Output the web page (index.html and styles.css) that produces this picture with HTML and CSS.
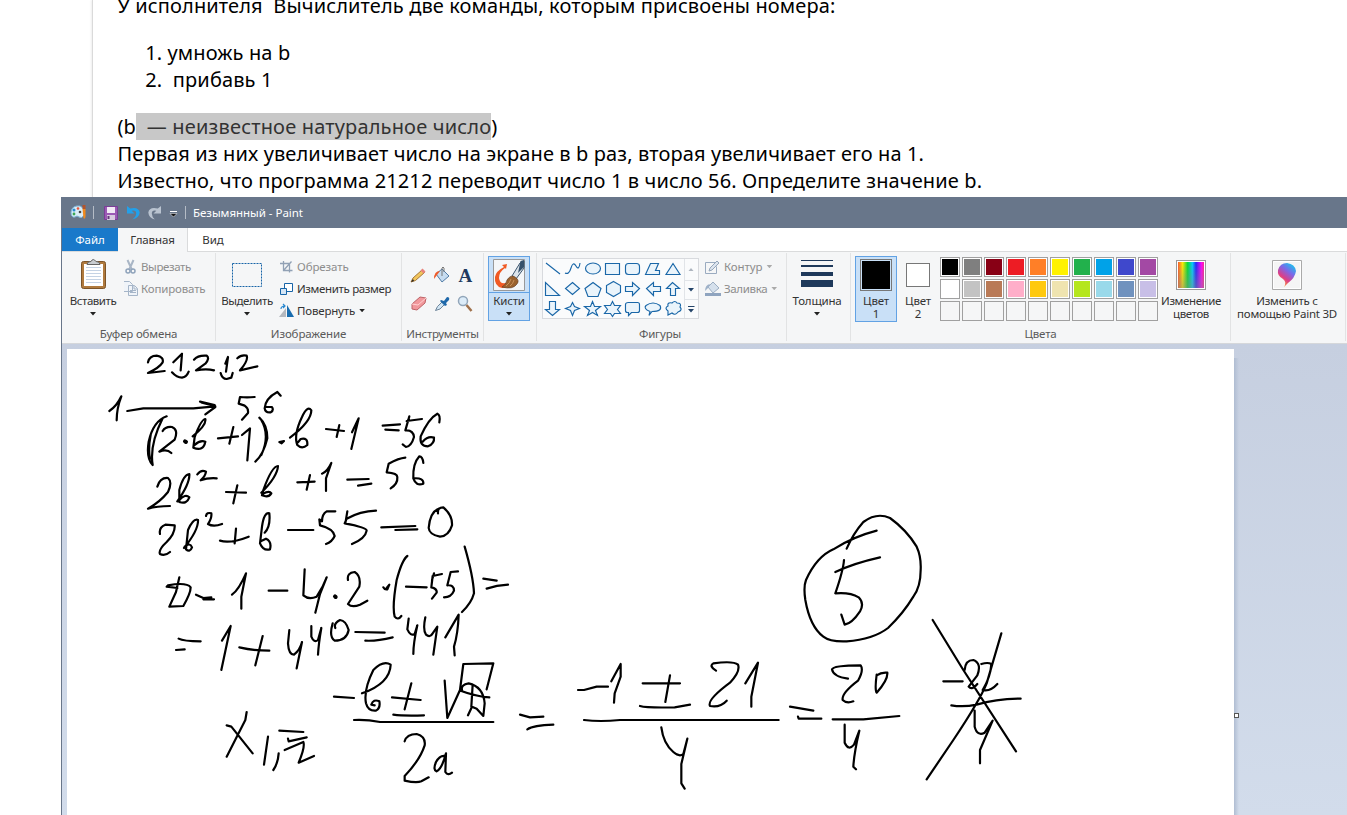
FILE: index.html
```html
<!DOCTYPE html>
<html lang="ru">
<head>
<meta charset="utf-8">
<title>Безымянный - Paint</title>
<link rel="stylesheet" href="styles.css">
</head>
<body>
<main class="screen">
<section class="problem">
<p>У исполнителя&nbsp; Вычислитель две команды, которым присвоены номера:</p>
<ol><li>умножь на b</li><li>&nbsp;прибавь 1</li></ol>
<p class="last">(b<span class="selected">&nbsp; — неизвестное натуральное число</span>)<br>Первая из них увеличивает число на экране в b раз, вторая увеличивает его на 1.<br>Известно, что программа 21212 переводит число 1 в число 56. Определите значение b.</p>
</section>
<section class="paint">
<header class="titlebar">
<svg class="quick" width="124" height="31" viewBox="62 197 124 31">
<path d="M71 212q1-7 9-6 6 3 4 9-2 4-5 2-2-2-4 0-4 1-4-5" fill="#d9edf7" stroke="#7fb5d8"/><circle cx="74" cy="210" r="1.500" fill="#2a8bd0"/><circle cx="78" cy="208.500" r="1.300" fill="#e6543a"/><circle cx="74" cy="214" r="1.400" fill="#3aa655"/><circle cx="80" cy="212" r="1.300" fill="#444"/><path d="M82.500 209h3v8q-1 3-2 1z" fill="#f28a1c"/><path d="M82.500 205h3v4h-3z" fill="#b3552c"/>
<path d="M93.500 206v13" stroke="#b5bcc6"/>
<path d="M104.500 206.500h13v13h-13z" fill="#9b5ab5" stroke="#7a3f96"/><path d="M107 207h8v6h-8z" fill="#f2eaf6"/><path d="M107 215h8v5h-8z" fill="#d8cbe0"/><path d="M108.500 216v3" stroke="#65367c" stroke-width="2"/>
<path d="M127 206v7.500h7.500l-2.800-2.800q4.500-1 4.500 2.800 0 3-4 6 7-1.500 7.500-7-1-6-9.500-4z" fill="#22a0ea"/>
<path d="M161 206v7.500h-7.500l2.800-2.800q-4.500-1-4.500 2.800 0 3 3 6-6-1.500-6.500-7 1-6 9.500-4z" fill="#b9c3d0"/>
<path d="M170 211.500h7" stroke="#fff"/><path d="M170 213.500h7l-3.500 3.500z" fill="#111" stroke="#fff" stroke-width=".5"/>
<path d="M185.500 206v13" stroke="#b5bcc6"/>
</svg>
<span class="title">Безымянный - Paint</span>
</header>
<nav class="tabs"><a class="tab file">Файл</a><a class="tab active">Главная</a><a class="tab view">Вид</a></nav>
<div class="ribbon">
<div class="group clipboard">
<div class="tools">
<div class="big"><svg width="32" height="34" viewBox="77 257 32 34"><rect x="81.500" y="261.500" width="24" height="27" rx="2" fill="#b07a3e" stroke="#7c5428"/><path d="M84 264h19v22H84z" fill="#fff"/><path d="M86 267.500h15M86 270.500h15M86 273.500h15M86 276.500h15M86 279.500h15M86 282.500h15" stroke="#c5d3e4"/><path d="M87 264.500q0-3 4-3 2-4 5 0 4 0 4 3z" fill="#c9cdd1" stroke="#666"/></svg><b>Вставить</b><i class="arrow"></i></div>
<div class="rows muted">
<div class="row"><svg width="17" height="20" viewBox="123 257 17 20"><path d="M126.500 260l4.500 10M132.500 260l-4.500 10" stroke="#a9b6c6" stroke-width="2"/><circle cx="127" cy="271" r="2" fill="none" stroke="#8fa3bb" stroke-width="1.500"/><circle cx="132" cy="271" r="2" fill="none" stroke="#8fa3bb" stroke-width="1.500"/></svg><b class="cut">Вырезать</b></div>
<div class="row"><svg width="17" height="20" viewBox="123 279 17 20"><path d="M122.500 281.500h6l3 3v7h-9zM127.500 285.500h6l3 3v7h-9z" fill="#f0f4f9" stroke="#a5b5c8"/><path d="M133 286v3h3M129 290.500h6M129 292.500h6" stroke="#a5b5c8" fill="none"/></svg><b>Копировать</b></div>
</div></div><div class="label">Буфер обмена</div></div>
<div class="group image">
<div class="tools">
<div class="big"><svg width="32" height="34" viewBox="231 257 32 34"><path d="M232.500 263.500h29v23h-29z" fill="none" stroke="#1764a7" stroke-dasharray="2 1"/></svg><b>Выделить</b><i class="arrow"></i></div>
<div class="rows">
<div class="row muted"><svg width="18" height="20" viewBox="279 257 18 20"><path d="M283.500 261v9.500h9M280 263.500h9.500v9M283.500 270.500l8-9" fill="none" stroke="#91a1b5" stroke-width="1.300"/></svg><b class="crop">Обрезать</b></div>
<div class="row"><svg width="18" height="20" viewBox="279 279 18 20"><path d="M284.500 283.500h8v8h-8z" fill="#fff" stroke="#1764a7"/><path d="M280.500 288.500h6v6h-6z" fill="#d6e6f5" stroke="#1764a7"/></svg><b class="resize">Изменить размер</b></div>
<div class="row"><svg width="18" height="20" viewBox="279 301 18 20"><path d="M279 317h7v-9z" fill="#b4b8be"/><path d="M287 317v-12l7 12z" fill="#196cae"/><path d="M281 309q0-3 4-3m-2-2l2 2-2 2" fill="none" stroke="#2888d0" stroke-width="1.200"/></svg><b>Повернуть</b><i class="arrow"></i></div>
</div></div><div class="label">Изображение</div></div>
<div class="group instruments">
<div class="tools">
<svg width="81" height="70" viewBox="402 252 81 70">
<path d="M411 282l2-4 9-8 2.500 2.500-9 8z" fill="#f2c65c" stroke="#a5773a"/><path d="M420.500 270.500l2-2 3 3-2 2z" fill="#e9837d"/><path d="M411 282l2-3 1 2z" fill="#222"/>
<path d="M436 274l6-5 7 7-7 6z" fill="#c6dcf0" stroke="#517ca6"/><path d="M442 276v-8q1-2 2 0v4" fill="none" stroke="#777"/><path d="M434 279q0-8 6-8l-3 4z" fill="#ee5b2b"/>
<text x="458.500" y="282" class="serifA">A</text>
<path d="M412 304l8-7 6 1-1 5-8 7-5-1z" fill="#f1989c" stroke="#bd6367"/><path d="M412 304l6 1 8-7" fill="none" stroke="#ffd1d1"/>
<path d="M435.500 310.500l2-4 5-5 2.500 2.500-5 5z" fill="#d1e6f5" stroke="#6d8499"/><path d="M441 300l3 1 3-4q3 0 2 3l-3 3 1 2-2 1-5-5z" fill="#1e68aa"/>
<circle cx="463" cy="301" r="4.500" fill="#dcecf9" stroke="#91a5b9" stroke-width="1.500"/><path d="M466.500 305l5 6" stroke="#a0714c" stroke-width="2.500"/>
</svg></div><div class="label">Инструменты</div></div>
<div class="group brushes"><div class="brush"><svg width="34" height="35" viewBox="492 257 34 35"><path d="M493.500 259.500h31v31h-31z" fill="#f4f6f8" stroke="#999"/><path d="M507 264l-5 1 2 2q-8 4-9 10-1 9 7 11 7 0 7-6-9 4-10-4 0-6 6-10l1 1z" fill="#f05a24"/><path d="M512 276l8-13 4-2v7l-8 11z" fill="#dce4eb" stroke="#3c566f"/><path d="M520.500 261l3.500-1v7l-6 6z" fill="#35516d"/><path d="M502 287q4-2 5-7 4-6 8-3 5 3 2 7-4 6-15 3" fill="#9a622e" stroke="#5b3820" stroke-width=".6"/><path d="M506 286q4-3 5-7M510 286q3-2 4-6" stroke="#ca925b" fill="none"/></svg><div class="split"><b>Кисти</b><i class="arrow"></i></div></div></div>
<div class="group shapes">
<div class="tools">
<div class="gallery"><svg width="156" height="59" viewBox="542 259 156 59">
<g fill="#eaf4fb" stroke="#1a67a8" stroke-width="1.150"><path d="M546 263l14 11M565 273q4 2 6-5t5-2 4-3" fill="none"/><ellipse cx="593" cy="268.500" rx="7.500" ry="5.500"/><path d="M605.500 263.500h14v11h-14z"/><rect x="625.500" y="263.500" width="14" height="11" rx="3"/><path d="M645.500 274.500l5-11h8l-3 7h4v4zM673 263.500l7 11h-14zM545.500 282.500v13h14zM572.500 282.500l7 6-7 6-7-6zM593 282.500l8 6-3 8h-10l-3-8zM613.500 281.500l7 4v7l-7 4-7-4v-7zM625.500 286.500h7v-4l7 6-7 7v-4h-7zM660.500 286.500h-7v-4l-7 6 7 7v-4h7zM670.500 295.500v-7h-4l6-6 7 6h-4v7zM549.500 301.500v8h-4l7 6 7-6h-4v-8zM572.500 302.500l2 4 5 2-5 2-2 5-2-5-5-2 5-2zM592.500 301.500l2 5h6l-5 4 2 5-5-3-5 3 2-5-5-4h6zM612.500 301.500l2 4h6l-3 4 3 4h-6l-2 3-2-3h-6l3-4-3-4h6z"/><path d="M628.500 302.500h9q2 0 2 2v6q0 2-2 2h-6l-3 3v-3h-1q-2 0-2-2v-6q0-2 3-2zM649 315.500l1-4q-7-3-4-6 7-5 14 0 3 6-8 6zM668 315v-4q-4-3 0-5-1-4 4-3 3-3 5 0 5 0 3 4 3 3-2 5-3 4-6 1z"/></g>
<path d="M684.500 259v59M685 280.500h13M685 299.500h13" stroke="#e1e4e8"/><path d="M688.500 271h5l-2.500-3z" fill="#aeb5bf"/><path d="M688 288h6l-3 3.500zM688 309h6l-3 3.500z" fill="#244469"/><path d="M688 306.500h6.500" stroke="#244469"/>
</svg></div>
<div class="rows muted">
<div class="row"><svg width="19" height="20" viewBox="705 257 19 20"><path d="M715 262.500h-9.500v11h11v-7" fill="none" stroke="#9aabc0"/><path d="M709 271l1-3 7-7 2 2-7 7z" fill="#dce4ee" stroke="#94a5ba"/></svg><b class="crop">Контур</b><i class="arrow"></i></div>
<div class="row"><svg width="19" height="20" viewBox="705 279 19 20"><path d="M705 293h16v3h-16z" fill="#8fa4bf"/><path d="M708 287l5-5 6 6-6 5z" fill="#d5e0ec" stroke="#9badc2"/><path d="M705 291q0-6 5-7l-2 4z" fill="#9fb2c9"/></svg><b class="resize">Заливка</b><i class="arrow"></i></div>
</div></div><div class="label">Фигуры</div></div>
<div class="group size"><div class="big"><svg width="32" height="34" viewBox="801 257 32 34"><path d="M801 260h32v1h-32zM801 265h32v2h-32zM801 272h32v4h-32zM801 280h32v7h-32z" fill="#1e395b"/></svg><b>Толщина</b><i class="arrow"></i></div></div>
<div class="group colors"><div class="tools">
<div class="color one"><div class="swatch"></div><b>Цвет<br>1</b></div>
<div class="color two"><div class="swatch"></div><b>Цвет<br>2</b></div>
<div class="palette"><s class="c1"></s><s class="c2"></s><s class="c3"></s><s class="c4"></s><s class="c5"></s><s class="c6"></s><s class="c7"></s><s class="c8"></s><s class="c9"></s><s class="c10"></s><s class="c11"></s><s class="c12"></s><s class="c13"></s><s class="c14"></s><s class="c15"></s><s class="c16"></s><s class="c17"></s><s class="c18"></s><s class="c19"></s><s class="c20"></s><s></s><s></s><s></s><s></s><s></s><s></s><s></s><s></s><s></s><s></s></div>
<div class="edit"><div class="rainbow"></div><b>Изменение<br>цветов</b></div>
</div><div class="label">Цвета</div></div>
<div class="group three"><div class="edit"><svg width="30" height="30" viewBox="0 0 30 30"><defs><linearGradient id="drop" x1="0.8" y1="0" x2="0.2" y2="1"><stop stop-color="#10cbed"/><stop offset=".35" stop-color="#7b68e9"/><stop offset=".65" stop-color="#dd3e87"/><stop offset="1" stop-color="#ffb11a"/></linearGradient></defs><path d="M.5.500h29v29H.500z" fill="#f5f5f5" stroke="#aaa"/><path d="M1.500 1.500h27v27h-27z" fill="none" stroke="#fff"/><path d="M12 27q3-5-1-8-6-3-5-9 2-7 9-7 8 1 9 8-1 7-8 12z" fill="url(#drop)"/></svg><b class="p3d">Изменить с<br>помощью Paint 3D</b></div></div>
</div>
<div class="workspace"><div class="canvas">
<svg class="ink" width="1167" height="466" viewBox="67 349 1167 466">
<g transform="translate(60 345) scale(.33333)"><path d="M264 52Q268 32 290 32Q312 36 308 52Q298 68 264 84L314 78M340 52L366 26L362 76M336 82Q350 98 366 98Q380 96 386 80M402 44Q414 30 440 32Q450 40 436 56L408 76Q440 70 462 76M496 56L504 36L498 80M482 84Q486 102 500 102L514 98L518 84M532 40Q544 28 560 32Q566 46 540 76L592 64M148 198Q170 184 184 154Q170 190 170 226M202 198L250 190L400 190L466 184M420 170L464 180L466 186L436 208M424 172L460 182M584 156Q560 158 540 156L536 176L554 182Q566 190 564 204L546 224M662 152L652 141Q616 160 614 190Q616 204 632 202Q642 196 636 186L620 186M320 214Q280 228 266 290Q258 340 278 360Q268 300 308 220M272 270Q264 310 270 342M308 258Q316 244 336 246Q356 254 344 284L298 320Q320 310 334 324M398 274Q440 240 436 222Q424 222 404 276L400 308Q430 320 436 290Q420 284 404 300M474 280L534 274M520 246L508 296M546 270L570 250L562 346M598 218Q622 240 622 280Q610 330 586 350M602 222Q632 270 604 330M412 388Q424 372 438 380Q436 394 422 406Q444 398 470 400"/><path class="dot" d="M375 289L378 291"/></g>
<g transform="translate(270 345) scale(.33333)"><path d="M28 291L42 288L35 295ZM60 278Q124 230 124 196Q112 180 96 216Q70 270 82 300Q96 314 112 300Q114 276 92 282L84 292M168 252L222 258M208 240L200 276M246 262L266 220L244 312M338 242L390 238M346 254L386 256M456 222L410 228M418 214L406 256Q430 254 432 276Q424 304 408 306L398 298M508 232Q512 210 502 206Q476 220 452 274Q448 304 474 304Q494 296 492 278Q474 272 458 290M82 412L134 410M120 390L110 434M156 386Q172 380 184 354L168 400L168 438M232 404L296 402M264 422L304 416M406 338Q386 340 356 356L350 382Q382 384 382 396Q384 416 362 430M460 354Q458 334 448 334Q428 356 430 400Q438 424 460 416Q462 398 432 400"/></g>
<g transform="translate(140 470) scale(.33333)"><path d="M52 50Q60 22 84 24Q98 36 84 66Q60 96 24 116Q50 108 90 108M112 94Q150 40 148 12Q130 14 118 60L118 96Q140 104 148 82Q136 70 118 90M258 66L318 68M292 46L280 100M364 68Q412 20 414 -12Q396 -12 370 60L366 76Q386 84 394 70Q388 60 368 72M60 192Q56 172 76 164L104 166Q106 190 80 216Q54 240 60 252Q74 260 90 246M132 234Q176 180 174 150Q160 144 144 180L138 238Q150 248 156 232Q150 216 134 230M198 138Q200 126 214 130Q216 144 204 162Q220 172 246 162M240 212Q270 222 326 200M288 176L284 220M374 188Q392 170 388 130Q372 126 366 170L360 220Q370 244 390 238Q396 214 378 206L362 214M444 180L520 180M586 124L560 124Q546 132 546 154L538 148L540 166Q580 176 584 198Q576 216 558 222M708 122Q660 124 620 146L614 160Q680 172 680 182Q676 206 636 222M622 124L616 160M118 322L108 366L88 410L130 408Q152 370 152 352Q140 336 84 346L80 350L112 354M168 374L190 384L214 382M190 388L222 388M276 374Q296 360 318 310L304 380L304 416M386 362L442 362M494 298L490 376Q506 390 530 380Q550 350 560 322L540 372L526 428M624 330Q620 308 644 306Q664 318 658 350L624 402Q636 414 660 404L682 392M116 506Q130 514 182 514M108 540L134 538M246 512L272 468L244 600M298 532Q340 542 388 542M368 498L346 586M448 480L444 520Q446 554 462 554Q480 540 486 516L470 595M514 468L514 500Q522 520 534 510L544 474Q536 520 534 554M578 460Q566 500 584 512Q620 512 626 480Q618 452 600 450Q580 460 586 474"/><path class="dot" d="M585 379L587 381"/></g>
<g transform="translate(330 500) scale(.33333)"><path d="M154 82L256 78M196 90L262 88M324 40Q322 22 340 22Q368 46 366 76Q356 108 330 110Q298 104 296 84Q300 36 326 26M160 262Q164 270 172 268L178 254L170 264M232 168Q216 180 200 240Q186 320 194 350Q204 362 214 348M228 260L290 262M336 222L308 228L304 262Q322 266 320 278L306 296M312 220L306 240M384 214L362 216L352 256Q372 254 372 272Q364 292 342 292M404 140Q430 230 432 280Q424 310 396 336M460 236L500 242M470 266Q500 256 534 254M76 396L164 398M106 422Q140 424 188 412M236 356L232 388Q242 410 254 402L262 376Q250 430 250 462M286 352Q278 390 288 404Q300 414 308 400L322 380L310 464M346 412L386 344Q384 400 372 440L374 466"/></g>
<g transform="translate(210 640) scale(.33333)"><path d="M372 170L432 174M456 160Q540 130 542 74Q520 60 490 90Q460 150 468 190Q474 214 498 212Q512 204 508 184Q490 176 484 194L494 196M546 172L632 180M604 130L584 208M550 224Q580 228 642 226M704 122L712 234L750 150L760 72L850 70L830 148M756 150Q752 134 776 130Q820 140 824 190L820 228L800 206L786 200L774 226M788 134L784 200M752 152Q800 170 838 172M432 240Q470 238 510 246L850 246M584 304Q590 282 620 282Q648 290 644 316Q630 360 584 408L584 422Q620 430 634 424L656 412M706 348Q690 344 678 366Q668 390 680 394Q696 386 708 340L706 396Q714 408 726 398M50 256L64 260L128 340M110 216L106 240L50 350M174 290L162 374M206 340Q204 370 190 390M208 272L280 276M234 296L236 304L290 292M224 330L280 306Q286 320 266 368L312 348"/></g>
<g transform="translate(500 640) scale(.33333)"><path d="M60 224L90 232L130 230M82 268Q100 256 160 254M234 150L252 150L290 140L324 140M334 124L362 72L362 110L344 160L342 188M428 130L540 130M510 106L496 186M420 198Q440 204 524 202L570 194M648 92Q626 78 640 70Q700 62 714 74Q722 94 690 128Q620 180 630 198Q660 204 680 182M736 130L774 68L754 170L754 200M252 240Q300 246 360 240L836 240M484 262Q490 310 520 336Q538 352 550 342L562 296M562 296L544 372L544 430L554 446"/></g>
<g transform="translate(780 510) scale(.33333)"><path d="M30 590L100 602M54 620L56 626L124 626M204 506Q160 500 156 478Q160 466 242 466Q252 480 234 512Q184 550 188 570Q200 582 220 574M290 494Q284 540 290 548Q324 510 322 488Q304 486 290 496M158 628L250 628L358 618M194 644L194 698Q206 724 222 704L238 662Q222 730 220 770L228 778M200 116Q220 70 250 36Q290 6 330 24Q380 60 410 110Q424 140 422 180Q422 230 400 260Q370 310 324 354Q280 388 200 394Q150 396 130 380Q90 350 76 270Q70 230 78 210Q110 140 160 118Q220 80 290 62M166 186Q220 160 300 142M192 150Q190 180 166 250Q210 246 236 262Q254 280 240 304Q216 340 194 344L184 314M458 330L550 480L708 724M664 370L620 520Q600 570 520 690L440 808M490 514L548 514M554 480Q556 450 580 450Q606 460 592 496L566 530Q576 542 592 522M604 462Q624 456 634 462Q632 500 608 540Q630 546 652 522M514 586Q550 592 590 584Q650 566 722 566M584 602L584 650Q592 680 614 668L638 632L600 720L600 760"/></g>
</svg></div><div class="shadow"></div><div class="handle"></div></div>
</section>
</main>
</body>
</html>
```
FILE: styles.css
```css
* { box-sizing: border-box; }
body { margin: 0; background: #fff; }
.screen { width: 1347px; height: 815px; overflow: hidden; display: flex; flex-direction: column; }
.problem { height: 197px; flex: none; overflow: hidden; margin-left: 92px; border-left: 1px solid #dadada; box-shadow: -1px 0 2px #eee; padding-left: 24.500px; font: 20px/27px "Noto Sans", sans-serif; letter-spacing: .12px; color: #000; white-space: nowrap; }
.problem p { margin: -8px 0 20px; }
.problem ol { margin: 0 0 20px; padding-left: 50px; }
.problem .last { margin: 0; }
.selected { background: #c8c8c8; color: #333; letter-spacing: .17px; }
.paint { flex: none; height: 618px; margin-left: 61px; border-left: 1px solid #68768a; font: 11.500px/13px "Noto Sans", sans-serif; color: #333; display: flex; flex-direction: column; white-space: nowrap; }
.paint b { font-weight: 400; }
.paint svg { display: block; flex: none; }
.titlebar { height: 31px; flex: none; background: #68768a; display: flex; align-items: center; color: #fff; }
.title { margin-left: 7px; letter-spacing: -.03px; }
.tabs { height: 23px; flex: none; display: flex; background: #fff; line-height: 24px; text-align: center; }
.file { width: 56px; background: #1979ca; color: #fff; }
.active { width: 70px; height: 24px; background: #f5f6f7; border-right: 1px solid #dadbdc; z-index: 1; letter-spacing: -.1px; }
.view { width: 50px; }
.ribbon { height: 93px; flex: none; display: flex; background: #f5f6f7; border-top: 1px solid #dadbdc; border-bottom: 1px solid #d5d7da; letter-spacing: -.17px; }
.group { flex: none; height: 91px; padding-top: 4px; display: flex; flex-direction: column; border-right: 1px solid; border-image: linear-gradient(transparent 2px, #e2e3e4 2px, #e2e3e4 88px, transparent 88px) 1; }
.tools { height: 71px; display: flex; }
.label { text-align: center; color: #5a5a5a; line-height: 14px; }
.clipboard { width: 154px; }
.image { width: 186px; }
.instruments { width: 82px; }
.instruments .label { letter-spacing: -.3px; }
.image .label { letter-spacing: -.1px; }
.instruments .tools { margin-top: -4px; height: 75px; }
.brushes { width: 53px; padding-left: 4px; }
.shapes { width: 250px; padding-left: 5px; }
.size { width: 64px; padding-right: 3px; }
.colors { width: 380px; }
.three { width: 115px; }
.big { width: 62px; display: flex; flex-direction: column; align-items: center; padding-top: 1px; }
.big b { margin-top: 3px; line-height: 14px; letter-spacing: -.45px; }
.arrow { width: 6px; height: 3.500px; background: #222; clip-path: polygon(0 0, 100% 0, 50% 100%); }
.big .arrow { margin-top: 4px; }
.size .big { width: 60px; }
.size .big b { letter-spacing: -.2px; }
.image .rows { margin-left: 1px; }
.row { height: 22px; display: flex; align-items: center; }
.row b { margin-top: -2px; }
.row .arrow { margin: -1px 0 0 4px; }
.cut { letter-spacing: -.4px; }
.crop { letter-spacing: -.1px; }
.resize { letter-spacing: -.35px; }
.muted { color: #8d8d8d; }
.muted .arrow { background: #aaa; }
.serifA { font: bold 19px "Liberation Serif", serif; fill: #203a60; }
.brush { width: 42px; height: 65px; border: 1px solid #62a2e4; background: #c9e0f7; display: flex; flex-direction: column; align-items: center; }
.split { height: 28px; width: 40px; border-top: 1px solid #62a2e4; display: flex; flex-direction: column; align-items: center; gap: 4px; line-height: 15px; }
.gallery { width: 157px; height: 61px; margin-top: 2px; border: 1px solid #d8dade; background: #fafbfc; }
.shapes .rows { margin-left: 6px; }
.shapes .gallery svg { margin: 0 -1px; }
.shapes .label { margin-right: 8px; }
.color { height: 66px; width: 42px; display: flex; flex-direction: column; align-items: center; text-align: center; }
.one { margin-left: 4px; border: 1px solid #62a2e4; background: #c9e0f7; padding-top: 2px; }
.one .swatch { width: 32px; height: 32px; background: #000; border: 1px solid #777; box-shadow: inset 0 0 0 1px #c9e0f7; margin-bottom: 3px; }
.two { padding-top: 7px; }
.two .swatch { width: 24px; height: 24px; background: #fff; border: 1px solid #777; margin-bottom: 7px; }
.palette { width: 218px; height: 64px; margin: 1px 0 0 1px; display: grid; grid-template-columns: repeat(10, 20px); grid-template-rows: repeat(3, 20px); gap: 2px; }
.palette s { border: 1px solid #a0a0a0; background: #f5f6f7; }
.palette [class] { box-shadow: inset 0 0 0 1px #fff; }
.palette .c1 { background: #000; } .palette .c2 { background: #7f7f7f; } .palette .c3 { background: #880015; } .palette .c4 { background: #ed1c24; } .palette .c5 { background: #ff7f27; }
.palette .c6 { background: #fff200; } .palette .c7 { background: #22b14c; } .palette .c8 { background: #00a2e8; } .palette .c9 { background: #3f48cc; } .palette .c10 { background: #a349a4; }
.palette .c11 { background: #fff; } .palette .c12 { background: #c3c3c3; } .palette .c13 { background: #b97a57; } .palette .c14 { background: #ffaec9; } .palette .c15 { background: #ffc90e; }
.palette .c16 { background: #efe4b0; } .palette .c17 { background: #b5e61d; } .palette .c18 { background: #99d9ea; } .palette .c19 { background: #7092be; } .palette .c20 { background: #c8bfe7; }
.edit { width: 66px; display: flex; flex-direction: column; align-items: center; text-align: center; padding-top: 4px; gap: 4px; letter-spacing: -.4px; }
.three .edit { width: 112px; }
.p3d { letter-spacing: -.25px; }
.rainbow { width: 30px; height: 30px; border: 1px solid #999; box-shadow: inset 0 0 0 1px #fff; background: linear-gradient(transparent, #8888), linear-gradient(90deg, #f33, #fe0 20%, #0d3 38%, #0cf 55%, #22f 68%, #f0f 87%, #f36); }
.workspace { height: 471px; flex: none; background: linear-gradient(#c6cfe0, #d2dceb); padding: 5px 0 0 5px; display: flex; }
.canvas { width: 1167px; height: 466px; background: #fff; flex: none; overflow: hidden; }
.ink path { fill: none; stroke: #000; stroke-width: 6.600; stroke-linecap: round; stroke-linejoin: round; }
.ink .dot { stroke-width: 12; }
.shadow { width: 5px; height: 457px; margin-top: 9px; background: linear-gradient(90deg, #b0bdd2, transparent); }
.handle { width: 5px; height: 5px; border: 1px solid #555; background: #fff; margin: 364px 0 0 -5px; }
```
